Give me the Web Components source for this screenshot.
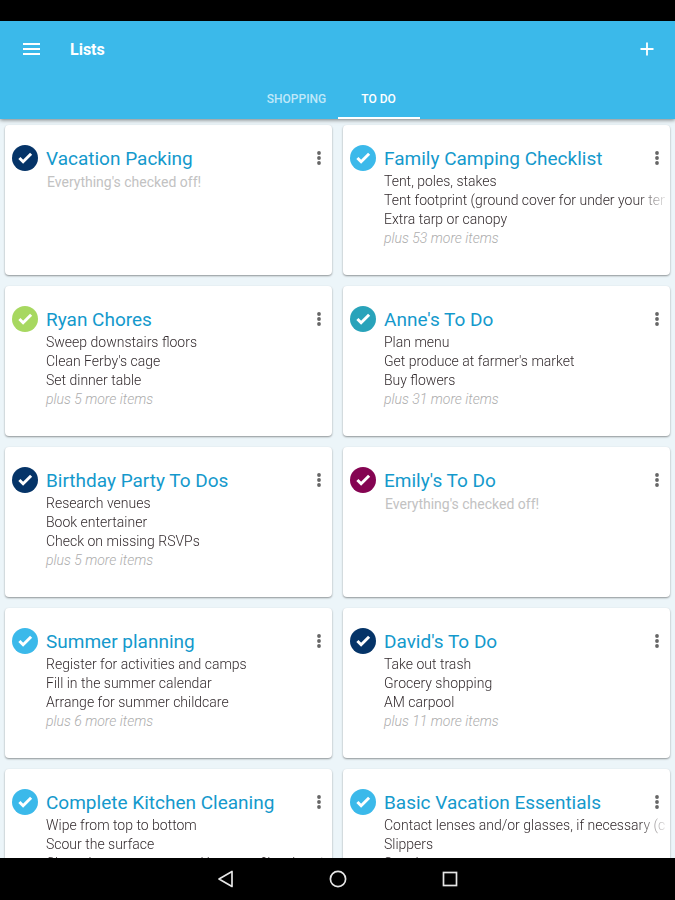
<!DOCTYPE html>
<html lang="en">
<head>
<meta charset="utf-8">
<meta name="viewport" content="width=device-width, initial-scale=1">
<title>Lists</title>
<style>
  html, body { margin: 0; height: 100%; }
  body { font-family: Roboto, "Liberation Sans", sans-serif; background: #000; }
</style>
</head>
<body>
<lists-app>
  <app-header slot="header" heading="Lists"></app-header>
  <todo-card color="#053468" heading="Vacation Packing"></todo-card>
  <todo-card color="#3bb9ea" heading="Family Camping Checklist" more="53"><li>Tent, poles, stakes</li><li>Tent footprint (ground cover for under your tent)</li><li>Extra tarp or canopy</li></todo-card>
  <todo-card color="#a7d860" heading="Ryan Chores" more="5"><li>Sweep downstairs floors</li><li>Clean Ferby's cage</li><li>Set dinner table</li></todo-card>
  <todo-card color="#29a3ba" heading="Anne's To Do" more="31"><li>Plan menu</li><li>Get produce at farmer's market</li><li>Buy flowers</li></todo-card>
  <todo-card color="#053468" heading="Birthday Party To Dos" more="5"><li>Research venues</li><li>Book entertainer</li><li>Check on missing RSVPs</li></todo-card>
  <todo-card color="#850452" heading="Emily's To Do"></todo-card>
  <todo-card color="#3bb9ea" heading="Summer planning" more="6"><li>Register for activities and camps</li><li>Fill in the summer calendar</li><li>Arrange for summer childcare</li></todo-card>
  <todo-card color="#053468" heading="David's To Do" more="11"><li>Take out trash</li><li>Grocery shopping</li><li>AM carpool</li></todo-card>
  <todo-card color="#3bb9ea" heading="Complete Kitchen Cleaning" more="8"><li>Wipe from top to bottom</li><li>Scour the surface</li><li>Clean the oven, range and burners, filter, hood</li></todo-card>
  <todo-card color="#3bb9ea" heading="Basic Vacation Essentials" more="20"><li>Contact lenses and/or glasses, if necessary (case)</li><li>Slippers</li><li>Sunglasses</li></todo-card>
  <system-nav slot="nav"></system-nav>
</lists-app>
<script>
class BaseElement extends HTMLElement {
  render(markup) {
    const template = document.createElement('template');
    template.innerHTML = markup;
    this.attachShadow({ mode: 'open' }).append(template.content.cloneNode(true));
  }
}

const buttonReset = `button { margin: 0; padding: 0; border: 0; background: none; color: inherit; font: inherit; cursor: pointer; display: grid; place-items: center; }
  svg { display: block; }`;

customElements.define('lists-app', class extends BaseElement {
  connectedCallback() {
    this.render(`<style>
      :host { display: flex; flex-direction: column; height: 100vh; }
      .status { flex: none; height: 21px; background: #000; }
      main { flex: 1; min-height: 0; overflow: hidden; background: #ecf5f9; }
      .grid { display: grid; grid-template-columns: repeat(2, minmax(0, 1fr)); gap: 11px; padding: 6px 5px; }
      ::slotted([slot]) { flex: none; }
    </style>
    <div class="status"></div>
    <slot name="header"></slot>
    <main><div class="grid"><slot></slot></div></main>
    <slot name="nav"></slot>`);
  }
});

customElements.define('app-header', class extends BaseElement {
  connectedCallback() {
    this.render(`<style>
      :host { display: block; position: relative; background: #3bb9ea; color: #fff; box-shadow: 0 1px 4px rgba(0, 0, 0, .5); }
      ${buttonReset}
      .bar { display: flex; align-items: center; height: 56px; padding: 0 16px; }
      .bar button { width: 32px; height: 32px; }
      h1 { flex: 1; margin: 0 0 0 22px; padding-top: 2px; font-size: 16px; line-height: 24px; font-weight: 700; }
      .add { margin-right: -4px; }
      nav { display: grid; grid-template-columns: 1fr 82px 82px 1fr; height: 42px; }
      nav button { padding-top: 4px; font-size: 12px; font-weight: 500; color: #bfe8f9; border-bottom: 2px solid transparent; }
      nav button:first-child { grid-column: 2; }
      nav button[aria-selected="true"] { color: #fff; border-color: #fff; }
    </style>
    <div class="bar">
      <button aria-label="Menu"><svg width="18" height="12" viewBox="0 0 18 12"><path d="M0 1h17M0 6h17M0 11h17" stroke="#fff" stroke-width="1.8"/></svg></button>
      <h1>${this.getAttribute('heading')}</h1>
      <button class="add" aria-label="Add list"><svg width="14" height="14" viewBox="0 0 14 14"><path d="M7 .5v13M.5 7h13" stroke="#fff" stroke-width="1.8"/></svg></button>
    </div>
    <nav role="tablist"><button role="tab" aria-selected="false">SHOPPING</button><button role="tab" aria-selected="true">TO DO</button></nav>`);
  }
});

customElements.define('todo-card', class extends BaseElement {
  connectedCallback() {
    const more = this.getAttribute('more');
    this.render(`<style>
      :host { display: grid; grid-template-columns: 26px minmax(0, 1fr); column-gap: 8px; align-content: start; box-sizing: border-box; height: 150px; padding: 20px 5px 8px 7px; background: #fff; border-radius: 4px; box-shadow: 0 1px 2px rgba(0, 0, 0, .4); }
      ${buttonReset}
      header { display: flex; align-items: flex-start; height: 27px; }
      h2 { flex: 1; min-width: 0; margin: 0; font-size: 19px; line-height: 27px; font-weight: 400; color: #1499cc; white-space: nowrap; }
      button { width: 16px; height: 26px; }
      ul { grid-column: 2; margin: 0; padding: 0; list-style: none; font-size: 14px; line-height: 19px; font-weight: 300; color: #332b2e; overflow: hidden; }
      ::slotted(li) { white-space: nowrap; overflow: hidden; -webkit-mask-image: linear-gradient(to left, rgba(0, 0, 0, .15), #000 28px); mask-image: linear-gradient(to left, rgba(0, 0, 0, .15), #000 28px); }
      p { grid-column: 2; margin: 0; font-size: 14px; line-height: 19px; color: #c2c2c2; }
      .more { font-style: italic; font-weight: 300; color: #adadad; }
      .done { padding: 1px; }
    </style>
    <svg width="26" height="26" viewBox="0 0 26 26" aria-hidden="true"><circle cx="13" cy="13" r="13" fill="${this.getAttribute('color')}"/><path d="M7.4 13l3.7 3.7 8-8" fill="none" stroke="#fff" stroke-width="3"/></svg>
    <header><h2>${this.getAttribute('heading')}</h2>
    <button aria-label="List options"><svg width="4" height="14" viewBox="0 0 4 14" fill="#666"><circle cx="2" cy="2" r="1.9"/><circle cx="2" cy="7" r="1.9"/><circle cx="2" cy="12" r="1.9"/></svg></button></header>
    ${more ? `<ul><slot></slot></ul><p class="more">plus ${more} more items</p>` : `<p class="done">Everything's checked off!</p>`}`);
  }
});

customElements.define('system-nav', class extends BaseElement {
  connectedCallback() {
    this.render(`<style>
      :host { display: flex; justify-content: center; align-items: center; gap: 80px; height: 42px; background: #000; }
      ${buttonReset}
      button { width: 32px; height: 32px; }
    </style>
    <button aria-label="Back"><svg width="18" height="18" viewBox="0 0 18 18"><path d="M15 1.5v15L2 9z" fill="none" stroke="#e6e6e6" stroke-width="1.7" stroke-linejoin="round"/></svg></button>
    <button aria-label="Home"><svg width="18" height="18" viewBox="0 0 18 18"><circle cx="9" cy="9" r="7.6" fill="none" stroke="#e6e6e6" stroke-width="1.7"/></svg></button>
    <button aria-label="Recent apps"><svg width="18" height="18" viewBox="0 0 18 18"><rect x="2.5" y="2.5" width="13" height="13" fill="none" stroke="#e6e6e6" stroke-width="1.7"/></svg></button>`);
  }
});
</script>
</body>
</html>
